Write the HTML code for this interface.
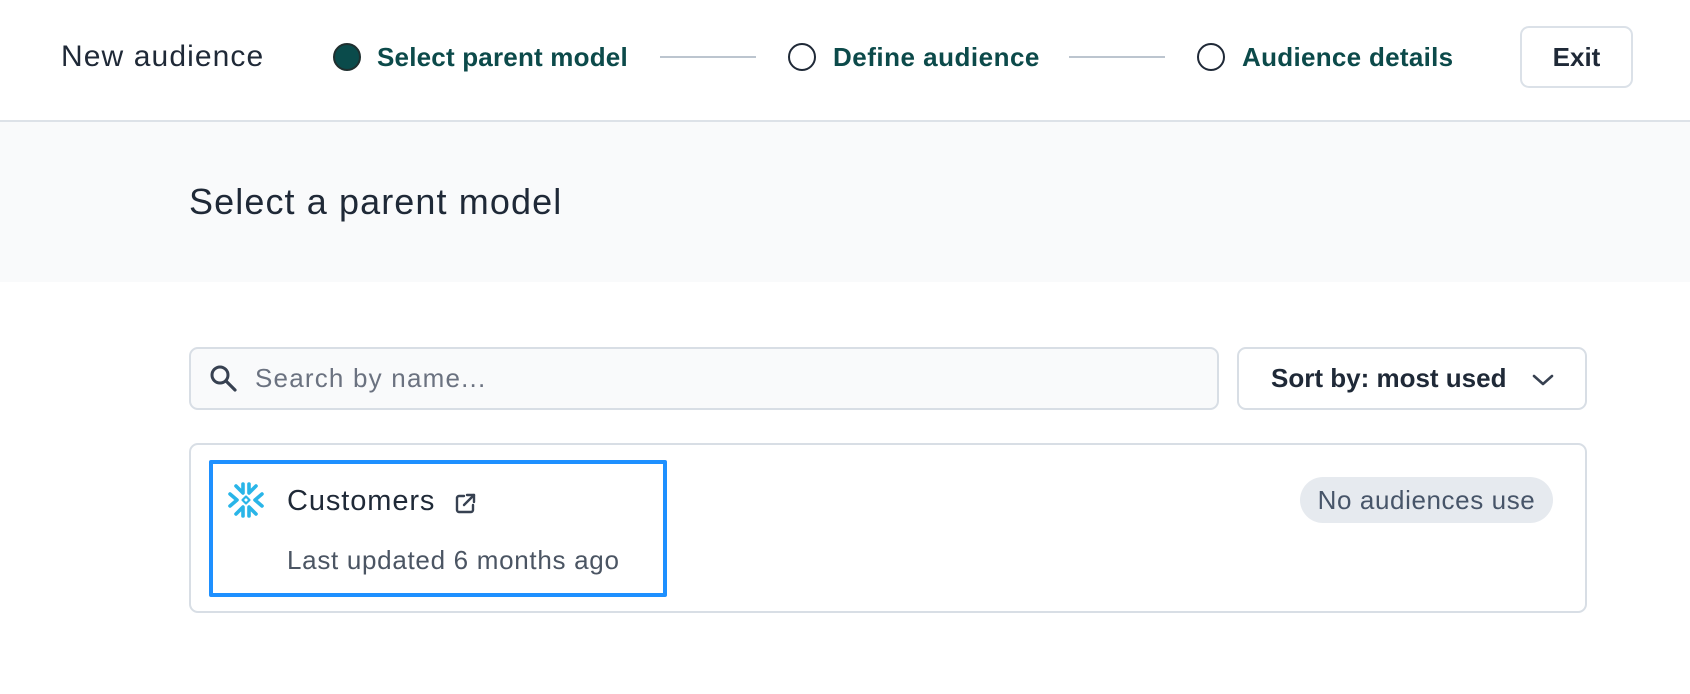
<!DOCTYPE html>
<html><head><meta charset="utf-8"><style>
*{margin:0;padding:0;box-sizing:border-box}
body{width:1690px;height:694px;background:#fff;font-family:"Liberation Sans",sans-serif;position:relative;overflow:hidden;color:#1f2937}
.a{position:absolute;white-space:nowrap}
.step{font-weight:bold;font-size:26px;color:#0c4a4a;line-height:30px;top:42px}
.line{position:absolute;height:2px;background:#bcc5cf;top:56px}
.circ{position:absolute;width:28px;height:28px;border-radius:50%;border:2px solid #1f2937;top:43px;background:#fff}
</style></head><body>
<div class="a" style="left:61px;top:39px;font-size:30px;line-height:36px;letter-spacing:1.1px">New audience</div>
<div class="circ" style="left:333px;background:#0a4b4b;border-color:#1f2f2f"></div>
<div class="a step" style="left:377px;letter-spacing:0.2px">Select parent model</div>
<div class="line" style="left:660px;width:96px"></div>
<div class="circ" style="left:788px"></div>
<div class="a step" style="left:833px;letter-spacing:0.5px">Define audience</div>
<div class="line" style="left:1069px;width:96px"></div>
<div class="circ" style="left:1197px"></div>
<div class="a step" style="left:1242px;letter-spacing:0.3px">Audience details</div>
<div class="a" style="left:1520px;top:26px;width:113px;height:62px;border:2px solid #dbe1e8;border-radius:9px;font-size:26px;font-weight:bold;line-height:58px;text-align:center;color:#1f2937">Exit</div>
<div class="a" style="left:0;top:120px;width:1690px;height:162px;background:#f9fafb;border-top:2px solid #dde2e8"></div>
<div class="a" style="left:189px;top:182px;font-size:36px;line-height:40px;letter-spacing:1.1px;color:#1f2937">Select a parent model</div>
<div class="a" style="left:189px;top:347px;width:1030px;height:63px;background:#f9fafb;border:2px solid #d8dee5;border-radius:9px"></div>
<svg class="a" style="left:209px;top:364px" width="30" height="28" viewBox="0 0 30 28"><circle cx="11" cy="11" r="8" fill="none" stroke="#374151" stroke-width="3"/><line x1="17" y1="17" x2="26" y2="26" stroke="#374151" stroke-width="3.2" stroke-linecap="round"/></svg>
<div class="a" style="left:255px;top:363px;font-size:26px;line-height:30px;letter-spacing:1.2px;color:#6b7280">Search by name...</div>
<div class="a" style="left:1237px;top:347px;width:350px;height:63px;background:#fff;border:2px solid #d8dee5;border-radius:9px"></div>
<div class="a" style="left:1271px;top:363px;font-size:26px;line-height:30px;font-weight:bold;color:#1f2937">Sort by: most used</div>
<svg class="a" style="left:1531px;top:372px" width="24" height="16" viewBox="0 0 24 16"><polyline points="3,4 12,12 21,4" fill="none" stroke="#374151" stroke-width="2.6" stroke-linecap="round" stroke-linejoin="round"/></svg>
<div class="a" style="left:189px;top:443px;width:1398px;height:170px;background:#fff;border:2px solid #d8dee5;border-radius:9px"></div>
<div class="a" style="left:209px;top:460px;width:458px;height:137px;border:4px solid #1e90ff;border-radius:2px"></div>
<svg class="a" style="left:228px;top:482px" width="36" height="36" viewBox="0 0 36 36" fill="none" stroke="#29b5e8" stroke-width="3.6" stroke-linecap="round" stroke-linejoin="round">
<polyline points="8,4 15,11 15,2"/><polyline points="28,4 21,11 21,2"/>
<polyline points="8,32 15,25 15,34"/><polyline points="28,32 21,25 21,34"/>
<polyline points="2,12 9,18 2,24"/><polyline points="34,12 27,18 34,24"/>
<path d="M18 14.5 L21.5 18 L18 21.5 L14.5 18 Z" stroke-width="2.2"/></svg>
<div class="a" style="left:287px;top:485px;font-size:29px;line-height:32px;letter-spacing:0.9px;color:#1f2937">Customers</div>
<svg class="a" style="left:455px;top:493px" width="21" height="21" viewBox="0 0 21 21" fill="none" stroke="#374151" stroke-width="2.4" stroke-linecap="round" stroke-linejoin="round"><path d="M9 3H4a2 2 0 0 0-2 2v12a2 2 0 0 0 2 2h12a2 2 0 0 0 2-2v-5"/><path d="M12 2h7v7"/><line x1="19" y1="2" x2="9" y2="12"/></svg>
<div class="a" style="left:287px;top:545px;font-size:26px;line-height:30px;letter-spacing:0.7px;color:#4b5563">Last updated 6 months ago</div>
<div class="a" style="left:1300px;top:477px;width:253px;height:46px;background:#e6eaef;border-radius:23px;font-size:26px;line-height:46px;text-align:center;letter-spacing:0.6px;color:#475569">No audiences use</div>
</body></html>
